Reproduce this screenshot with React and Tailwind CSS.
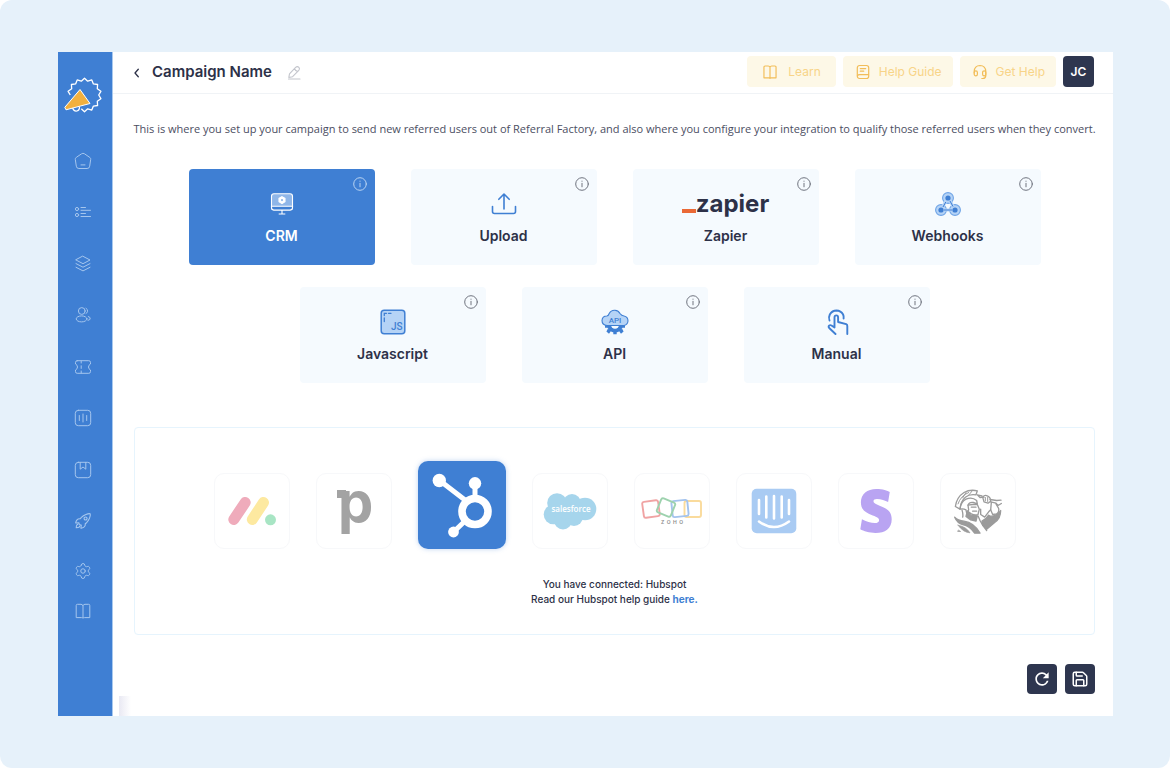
import { Settings, Save } from "lucide-react";
import { IoRocketOutline } from "react-icons/io5";
import { MdRefresh } from "react-icons/md";
import { SiStripe } from "react-icons/si";

function Line({ size = 18, width = 1, box = 18, className = "", children }) {
  return (
    <svg
      width={size}
      height={size}
      viewBox={`0 0 ${box} ${box}`}
      fill="none"
      stroke="currentColor"
      strokeWidth={width}
      strokeLinecap="round"
      strokeLinejoin="round"
      className={className}
      aria-hidden="true"
    >
      {children}
    </svg>
  );
}

const BookIcon = (props) => (
  <Line {...props}>
    <path d="M9 3.6Q8.6 2.3 7 2.3H3.4Q2.2 2.3 2.2 3.5V15.6H7.4Q9 15.6 9 16.2Q9 15.6 10.6 15.6H15.8V3.5Q15.8 2.3 14.6 2.3H11Q9.400 2.3 9 3.600V15.800" />
  </Line>
);

const HomeIcon = () => (
  <Line>
    <path d="M7.700 1.700Q9 .8 10.300 1.700L15.900 5.500Q16.900 6.200 16.700 7.400L15.700 14.200Q15.400 16.500 13.100 16.500H4.900Q2.600 16.500 2.300 14.200L1.300 7.400Q1.100 6.200 2.100 5.500Z" />
    <path d="M7 12.900h4" />
  </Line>
);

const ListIcon = () => (
  <Line>
    <circle cx="3" cy="6" r="1.600" />
    <circle cx="3" cy="12" r="1.600" />
    <path d="M7 4.500h4.500M7 7.300h9.500M7 10.500h4.500M7 13.500h9.500" />
  </Line>
);

const LayersIcon = () => (
  <Line>
    <path d="M9 1.300L16 5L9 8.700L2 5Z" />
    <path d="M2 8.600L9 12.200L16 8.600M2 12.300L9 15.900L16 12.300" />
  </Line>
);

const UsersIcon = () => (
  <Line>
    <circle cx="7.800" cy="5" r="3.400" />
    <ellipse cx="7.600" cy="12.900" rx="5.400" ry="3" />
    <path d="M12 2.200Q14.100 3.300 13.500 5.700Q13.100 7 12 7.500M14.300 10.500Q16.600 11.100 16.200 13Q15.800 14.200 14 14.300" />
  </Line>
);

const TicketIcon = () => (
  <Line>
    <path d="M3.200 2.700H14.800Q16.500 2.700 16.500 4.400V6Q14.500 7 14.500 9T16.500 12V13.600Q16.500 15.300 14.800 15.300H3.200Q1.500 15.300 1.500 13.600V12Q3.500 11 3.500 9T1.500 6V4.400Q1.500 2.700 3.200 2.700Z" />
    <path d="M7.200 3v2M7.200 7.800v2.600M7.200 13v2" />
  </Line>
);

const BarsIcon = () => (
  <Line>
    <rect x="1.300" y="1.300" width="15.400" height="15.400" rx="3" />
    <path d="M5.300 6.500v5M9 5v8M12.700 6.500v5" />
  </Line>
);

const BookmarkIcon = () => (
  <Line>
    <rect x="1.300" y="1.300" width="15.400" height="15.400" rx="3" />
    <path d="M6.200 1.500V8.200L9 6L11.800 8.200V1.500" />
  </Line>
);

const GuideIcon = () => (
  <Line size={16} width={1.2} box={16}>
    <rect x="2.300" y="1.500" width="11.400" height="13" rx="2.200" />
    <path d="M2.500 11.700Q3 10.600 4.500 10.600H13.500M5.300 4.600h5.400M5.300 7.200h3.400" />
  </Line>
);

const HeadsetIcon = () => (
  <Line size={16} width={1.2} box={16}>
    <path d="M2.200 9V7.400Q2.500 1.600 8 1.500Q13.500 1.600 13.800 7.400V11.600Q13.600 14.400 10.800 14.500H9.800" />
    <rect x="2.200" y="6.800" width="3.200" height="5" rx="1.600" />
    <rect x="10.600" y="6.800" width="3.200" height="5" rx="1.600" />
  </Line>
);

const navItems = [
  ["Dashboard", HomeIcon],
  ["Campaigns", ListIcon],
  ["Templates", LayersIcon],
  ["Users", UsersIcon],
  ["Rewards", TicketIcon],
  ["Reports", BarsIcon],
  ["Saved", BookmarkIcon],
  ["Launch", () => <IoRocketOutline size={18} />],
];

function BrandLogo() {
  const teeth = Array.from({ length: 28 }, (_, i) => {
    const angle = ((i * 360) / 28 - 90) * (Math.PI / 180);
    const radius = i % 2 === 0 ? 16.8 : 14.2;
    return [20.5 + radius * Math.cos(angle), 18 + radius * Math.sin(angle)];
  });
  const open = [...teeth.slice(21), ...teeth.slice(0, 16)];
  return (
    <svg width="38" height="36" viewBox="0 0 38 36" aria-hidden="true">
      <path
        d={"M" + open.map(([x, y]) => `${x.toFixed(1)} ${y.toFixed(1)}`).join("L")}
        fill="none"
        stroke="#fff"
        strokeWidth="1.300"
        strokeLinejoin="round"
      />
      <path d="M8.500 30.500Q9.500 34.500 13 34Q15.800 33.200 15.400 29.500" fill="none" stroke="#fff" strokeWidth="1.200" />
      <path d="M16 12.500L26 26.500L2 32.800L.8 30.300Z" fill="#f1b03f" stroke="#fff" strokeWidth="1" strokeLinejoin="round" />
    </svg>
  );
}

function Sidebar() {
  return (
    <nav
      aria-label="Main"
      className="flex w-[55px] shrink-0 flex-col items-center border-r border-[#a9c9ee] bg-[#3f7fd3] pr-1 text-[#a5c6ee]"
    >
      <a href="#home" aria-label="Home" className="mt-[25px]">
        <BrandLogo />
      </a>
      <div className="mt-[39px] flex h-[378px] flex-col justify-between">
        {navItems.map(([label, Icon]) => (
          <a key={label} href={"#" + label.toLowerCase()} aria-label={label}>
            <Icon />
          </a>
        ))}
      </div>
      <a href="#settings" aria-label="Settings" className="mt-8">
        <Settings size={18} strokeWidth={1.3} />
      </a>
      <a href="#docs" aria-label="Docs" className="mt-[22px]">
        <BookIcon />
      </a>
    </nav>
  );
}

function HelpButton({ icon, children, className }) {
  return (
    <button
      type="button"
      className={
        "flex h-[31px] items-center rounded-[4px] bg-[#fdf8e7] text-xs text-[#f8d488] " + className
      }
    >
      <span className="text-[#f2bd58]">{icon}</span>
      {children}
    </button>
  );
}

function Header() {
  return (
    <header className="flex h-[42px] items-center border-b border-[#f0f3f6] pr-[19px] pl-[18px]">
      <button type="button" aria-label="Back" className="text-[#2d3148]">
        <Line size={12} box={12} width={1.3}>
          <path d="M7.300 2.300L4 6L7.300 9.700" />
        </Line>
      </button>
      <h1 className="ml-[9px] text-[15px] font-semibold text-[#2d3148]">Campaign Name</h1>
      <button type="button" aria-label="Edit name" className="ml-3.5 text-[#c3c5cc]">
        <Line size={16} box={16} width={1.1}>
          <path d="M9.600 2.400Q11.300 .8 12.900 2.300Q14.200 3.800 12.800 5.300L6.600 11.700L2.800 12.500L3.500 8.800ZM8.500 3.700Q9.300 6 11.700 6.400M2.500 14h11.500" />
        </Line>
      </button>
      <div className="ml-auto flex gap-[7px] self-start pt-1">
        <HelpButton icon={<BookIcon size={16} width={1.3} />} className="gap-2.5 px-[15px]">
          Learn
        </HelpButton>
        <HelpButton icon={<GuideIcon />} className="gap-2 pr-[11px] pl-3">
          Help Guide
        </HelpButton>
        <HelpButton icon={<HeadsetIcon />} className="gap-2 pr-[11px] pl-3">
          Get Help
        </HelpButton>
        <button
          type="button"
          className="size-[31px] rounded-[4px] bg-[#2e364f] text-xs font-semibold text-white"
        >
          JC
        </button>
      </div>
    </header>
  );
}

const CrmIcon = () => (
  <svg width="24" height="24" viewBox="0 0 24 24" fill="none" stroke="#fff" strokeWidth="1.100" aria-hidden="true">
    <rect x="1.500" y="1.800" width="21" height="16.200" rx="2.500" fill="#8fb6e8" />
    <path d="M1.500 14.200H22.500V15.500Q22.500 18 20 18H4Q1.500 18 1.500 15.500Z" fill="#3f7fd3" />
    <path d="M12 18v3.800M8.700 22h6.600" />
    <path d="M12 4.700L15 6.400V9.800L12 11.500L9 9.800V6.400Z" fill="#fff" />
    <circle cx="12" cy="8.100" r="1.100" fill="#8fb6e8" stroke="none" />
  </svg>
);

const UploadIcon = () => (
  <Line size={26} box={26} width={1.600}>
    <path d="M13 18V3.500M7.800 8.300L13 3L18.200 8.300M1.500 15.500V20.500Q1.500 22.500 3.500 22.500H22.500Q24.500 22.500 24.500 20.500V15.500" />
  </Line>
);

const ZapierLogo = () => (
  <span className="flex items-center font-bold">
    <span className="mt-3.5 h-1 w-[14px] bg-[#ea6936]" />
    <span className="text-2xl leading-[26px] text-[#2d3148]">zapier</span>
  </span>
);

const WebhooksIcon = () => (
  <svg width="26" height="26" viewBox="0 0 26 26" fill="none" aria-hidden="true">
    <g stroke="#6fa4e6" strokeWidth="1.100" fill="#b5d3f6">
      <circle cx="13" cy="7" r="5.400" />
      <circle cx="6" cy="19" r="5.400" />
      <circle cx="20" cy="19" r="5.400" />
    </g>
    <path d="M12.500 7L6.300 18.500M13.500 7L19.500 18M6 19H20" stroke="#b5d3f6" strokeWidth="3" />
    <path d="M15 10L18 15.500M9 19H17M10.800 11L8 16" stroke="#3f7fd3" strokeWidth="1" />
    <g fill="#3f7fd3">
      <circle cx="13" cy="7" r="2.600" />
      <circle cx="6" cy="19" r="2.600" />
      <circle cx="20" cy="19" r="2.600" />
    </g>
  </svg>
);

const JsIcon = () => (
  <svg width="26" height="26" viewBox="0 0 26 26" fill="none" stroke="#3f7fd3" strokeLinecap="round" aria-hidden="true">
    <rect x="1.200" y="1.200" width="23.600" height="23.600" rx="3" fill="#b5d3f6" strokeWidth="1.500" />
    <path d="M4.300 12.500V9M4.300 6.500V4.300H6.500M8.500 4.300H11" strokeWidth="1.300" />
    <text x="11" y="21" fontSize="10" fill="#3f7fd3" stroke="none" className="font-[Roboto,sans-serif] font-medium">
      JS
    </text>
  </svg>
);

const ApiIcon = () => (
  <svg width="28" height="26" viewBox="0 0 28 26" fill="none" stroke="#3f7fd3" strokeWidth="1.100" aria-hidden="true">
    <g stroke="none" fill="#3f7fd3">
      <circle cx="14" cy="15.500" r="8" />
      <path d="M12.300 22h3.400v3.300h-3.400zM4 15h4v3.800h-4zM20 15h4v3.800h-4z" />
      <path d="M7 19.500l3 2.500-2 2.800-2.600-2.300zM21 19.500l-3 2.500 2 2.800 2.600-2.300z" />
    </g>
    <circle cx="14" cy="15.500" r="4.200" fill="#f5fafe" stroke="none" />
    <path
      d="M6 16.500Q1 16 1 11.500Q1.300 7 5.800 7Q7.500 6.800 8.200 4.500Q10 1 14 1.300Q17.500 1.500 19.200 4.800Q20.500 6.700 23 7Q27 7.800 27 12Q26.600 16.200 22.500 16.500Z"
      fill="#b5d3f6"
    />
    <text x="14" y="13.700" textAnchor="middle" fontSize="8" fill="#3f7fd3" stroke="none" className="font-[Roboto,sans-serif] font-medium">
      API
    </text>
  </svg>
);

const TapIcon = () => (
  <Line size={26} box={26} width={1.900} className="text-[#3f7fd3]">
    <path d="M5.500 11.500Q4.300 8.500 5.800 5.500Q8.100 1.500 12.500 1.500Q16.900 1.600 19.100 5.500Q20 7.500 19.600 9.500" />
    <path d="M11.500 25L5.200 19Q4 17.500 5.300 16.500Q6.200 15.800 7.500 16.500L10.500 18.500V8.500Q10.500 6.400 12.300 6.400T14.100 8.500V13L22.200 15.200Q23.300 15.700 23.300 17V25" />
  </Line>
);

const methods = [
  ["CRM", CrmIcon],
  ["Upload", UploadIcon],
  ["Zapier", ZapierLogo],
  ["Webhooks", WebhooksIcon],
  ["Javascript", JsIcon],
  ["API", ApiIcon],
  ["Manual", TapIcon],
];

function MethodCard({ label, Icon, active }) {
  return (
    <button
      type="button"
      aria-pressed={active}
      className={
        "relative flex h-24 w-[186px] flex-col items-center gap-[9px] rounded-[4px] pt-[22px] " +
        (active ? "bg-[#3f7fd3] text-white" : "bg-[#f5fafe] text-[#2d3148]")
      }
    >
      <Line
        size={14}
        box={14}
        className={"absolute top-2 right-2 " + (active ? "text-[#b9d3f2]" : "text-[#70747f]")}
      >
        <circle cx="7" cy="7" r="6.300" />
        <path d="M7 6.300v3.500M7 4.100v.2" />
      </Line>
      <span className={"flex h-[26px] items-center " + (active ? "" : "text-[#3f7fd3]")}>
        <Icon />
      </span>
      <span className="text-sm leading-5 font-semibold">{label}</span>
    </button>
  );
}

const MondayLogo = () => (
  <svg width="48" height="30" viewBox="0 0 48 30" strokeWidth="11" strokeLinecap="round" aria-hidden="true">
    <path d="M5.800 23.500L17.200 6.500" stroke="#efabbb" />
    <path d="M24.300 23.500L35.500 6.500" stroke="#fde9a0" />
    <circle cx="42.500" cy="23.800" r="5.500" fill="#a8e5c4" />
  </svg>
);

const PipedriveLogo = () => (
  <svg width="72" height="96" viewBox="0 0 72 96" fill="#a3a3a3" className="shrink-0" aria-hidden="true">
    <rect x="19" y="27" width="9" height="8" />
    <text x="20" y="59" fontSize="56" className="font-[Inter,sans-serif] font-bold">
      p
    </text>
  </svg>
);

const HubspotLogo = () => (
  <svg width="88" height="88" viewBox="0 0 88 88" fill="none" stroke="#fff" aria-hidden="true">
    <circle cx="57" cy="50.500" r="13" strokeWidth="7.600" />
    <path d="M21 19L47 39M57 22V38M35.500 71L47 60" strokeWidth="5" />
    <g fill="#fff" stroke="none">
      <circle cx="21.300" cy="19.500" r="6.700" />
      <circle cx="57" cy="22.300" r="6.200" />
      <circle cx="35.500" cy="71" r="5.400" />
    </g>
  </svg>
);

const SalesforceLogo = () => (
  <svg width="54" height="38" viewBox="0 0 54 38" fill="#a6d5ec" aria-hidden="true">
    <circle cx="14" cy="11" r="9.800" />
    <circle cx="29" cy="11" r="9" />
    <circle cx="42" cy="17" r="11.300" />
    <circle cx="10.500" cy="22.500" r="9.800" />
    <circle cx="20" cy="28.500" r="9" />
    <circle cx="31" cy="25" r="9" />
    <circle cx="23" cy="19" r="8" />
    <text x="28" y="20" textAnchor="middle" fontSize="8" fill="#fff" className="font-['Open_Sans',sans-serif] font-semibold">
      salesforce
    </text>
  </svg>
);

const ZohoLogo = () => (
  <svg width="62" height="28" viewBox="0 0 62 28" fill="none" strokeWidth="1.900" aria-hidden="true">
    <rect x="2" y="4" width="16" height="16" rx="2" stroke="#f0a3a3" transform="rotate(-8 10 12)" />
    <rect x="43.500" y="4" width="16.500" height="16" rx="2" stroke="#fadb9c" />
    <rect x="31" y="3.500" width="16" height="16" rx="2" stroke="#a3c3ee" transform="rotate(-6 39 11.500)" />
    <rect x="17.500" y="3" width="15" height="15" rx="2" stroke="#9dd2ae" transform="rotate(22 25 10.500)" />
    <text x="31" y="27" textAnchor="middle" fontSize="5" fill="#8b8b8b" className="font-[Inter,sans-serif] font-semibold">
      {"Z\u2002O\u2002H\u2002O"}
    </text>
  </svg>
);

const IntercomLogo = () => (
  <svg width="46" height="46" viewBox="0 0 46 46" fill="none" stroke="#fff" strokeWidth="2.600" strokeLinecap="round" aria-hidden="true">
    <rect x=".7" y=".7" width="44.600" height="44.600" rx="5" fill="#a9cbf3" stroke="none" />
    <path d="M8 12V26M15.300 8.500V29.500M23 8V30.500M30.700 8.500V29.500M38 12V26M8 33.500Q23 44.500 38 33.500" />
  </svg>
);

const StripeLogo = () => <SiStripe size={44} className="text-[#b9a4f2]" aria-hidden="true" />;

const TitanLogo = () => (
  <svg width="48" height="45" viewBox="0 0 144 134" fill="none" stroke="#9b9b9b" strokeWidth="4" strokeLinejoin="round" strokeLinecap="round" aria-hidden="true">
    <path d="M4 52Q8 24 30 10Q48 0 70 5L66 17Q46 14 34 24Q20 36 18 60Z" />
    <path d="M12 44Q20 20 44 10M26 26L36 10M44 18L54 6" strokeWidth="3" />
    <path d="M18 60Q20 38 36 30Q54 22 68 34L70 44L58 40Q46 38 42 48L44 62L38 72L36 62Q28 58 18 60Z" />
    <path d="M24 62Q28 76 26 84M42 48L56 46L70 46L76 60L72 76Q62 80 52 74L40 66M52 54h14M56 66h12" />
    <path d="M40 66L50 78L70 80L66 96L50 92L36 82Z" fill="#9b9b9b" />
    <path d="M2 84Q12 94 30 96Q60 100 78 132H62Q48 110 26 106Q10 102 2 84Z" fill="#9b9b9b" />
    <path d="M12 108Q36 112 48 131Q28 130 12 108ZM14 123L20 127L12 127Z" fill="#9b9b9b" strokeWidth="2" />
    <path d="M70 17L78 25L90 24M70 17L84 20M108 31L128 34L141 33M110 38L126 42L132 49L142 43" />
    <path d="M86 24Q92 16 100 20Q110 24 110 36L102 42L90 38Z" />
    <path d="M94 25v10M101 25v12" strokeWidth="3" />
    <path d="M112 40L110 62L116 76L128 74Q136 70 134 58L126 44" />
    <path d="M80 60V76L92 84L104 68L110 62" />
    <path d="M140 64Q140 88 122 100L98 120L86 108L84 96Q98 88 104 78Q112 84 124 78Q134 74 140 64Z" fill="#9b9b9b" />
    <path d="M72 80L78 94L86 108L98 124" />
  </svg>
);

const integrations = [
  ["Monday", MondayLogo],
  ["Pipedrive", PipedriveLogo],
  ["Hubspot", HubspotLogo],
  ["Salesforce", SalesforceLogo],
  ["Zoho", ZohoLogo],
  ["Intercom", IntercomLogo],
  ["Stripe", StripeLogo],
  ["ServiceTitan", TitanLogo],
];

function IntegrationTile({ label, Logo, active }) {
  return (
    <button
      type="button"
      aria-label={label}
      aria-pressed={active}
      className={
        "flex items-center justify-center " +
        (active
          ? "size-[88px] rounded-[10px] bg-[#3f7fd3] shadow-[0_0_5px_rgba(63,127,211,0.35)]"
          : "size-[76px] rounded-[10px] border border-[#f7f8fa] bg-white")
      }
    >
      <Logo />
    </button>
  );
}

function Actions() {
  return (
    <div className="mt-[29px] flex justify-end gap-2">
      <button
        type="button"
        aria-label="Refresh"
        className="flex size-[30px] items-center justify-center rounded-[4px] bg-[#2e364f] text-white"
      >
        <MdRefresh size={20} />
      </button>
      <button
        type="button"
        aria-label="Save"
        className="flex size-[30px] items-center justify-center rounded-[4px] bg-[#2e364f] text-white"
      >
        <Save size={18} strokeWidth={2} />
      </button>
    </div>
  );
}

export default function App() {
  return (
    <div className="min-h-screen bg-white font-['Inter',sans-serif]">
      <div className="flex min-h-screen rounded-xl bg-[#e6f1fa] py-[52px] pr-[57px] pl-[58px]">
        <div className="flex flex-1 bg-white">
          <Sidebar />
          <div className="relative min-w-0 flex-1">
            <Header />
            <main className="pt-[26px] pr-[18px] pb-[22px] pl-[21px]">
              <p className="-mx-2 text-center font-['Open_Sans',sans-serif] text-[11px] leading-[18px] text-[#4b4e62]">
                This is where you set up your campaign to send new referred users out of Referral
                Factory, and also where you configure your integration to qualify those referred
                users when they convert.
              </p>
              <div className="mt-[31px] flex flex-wrap justify-center gap-x-9 gap-y-[22px]">
                {methods.map(([label, Icon]) => (
                  <MethodCard key={label} label={label} Icon={Icon} active={label === "CRM"} />
                ))}
              </div>
              <section className="mt-11 rounded-[4px] border border-[#e6f4fd] pt-[33px] pb-[27px]">
                <div className="flex flex-wrap items-end justify-center gap-[26px]">
                  {integrations.map(([label, Logo]) => (
                    <IntegrationTile key={label} label={label} Logo={Logo} active={label === "Hubspot"} />
                  ))}
                </div>
                <p className="mt-7 text-center text-[10px] leading-[15px] font-medium text-[#2d3148]">
                  You have connected: Hubspot
                  <br />
                  Read our Hubspot help guide{" "}
                  <a href="#hubspot-guide" className="font-bold text-[#3f7fd3]">
                    here.
                  </a>
                </p>
              </section>
              <Actions />
            </main>
            <span className="absolute bottom-0 left-1.5 h-5 w-3 bg-linear-to-r from-[#e9e9f3] to-white" />
          </div>
        </div>
      </div>
    </div>
  );
}
